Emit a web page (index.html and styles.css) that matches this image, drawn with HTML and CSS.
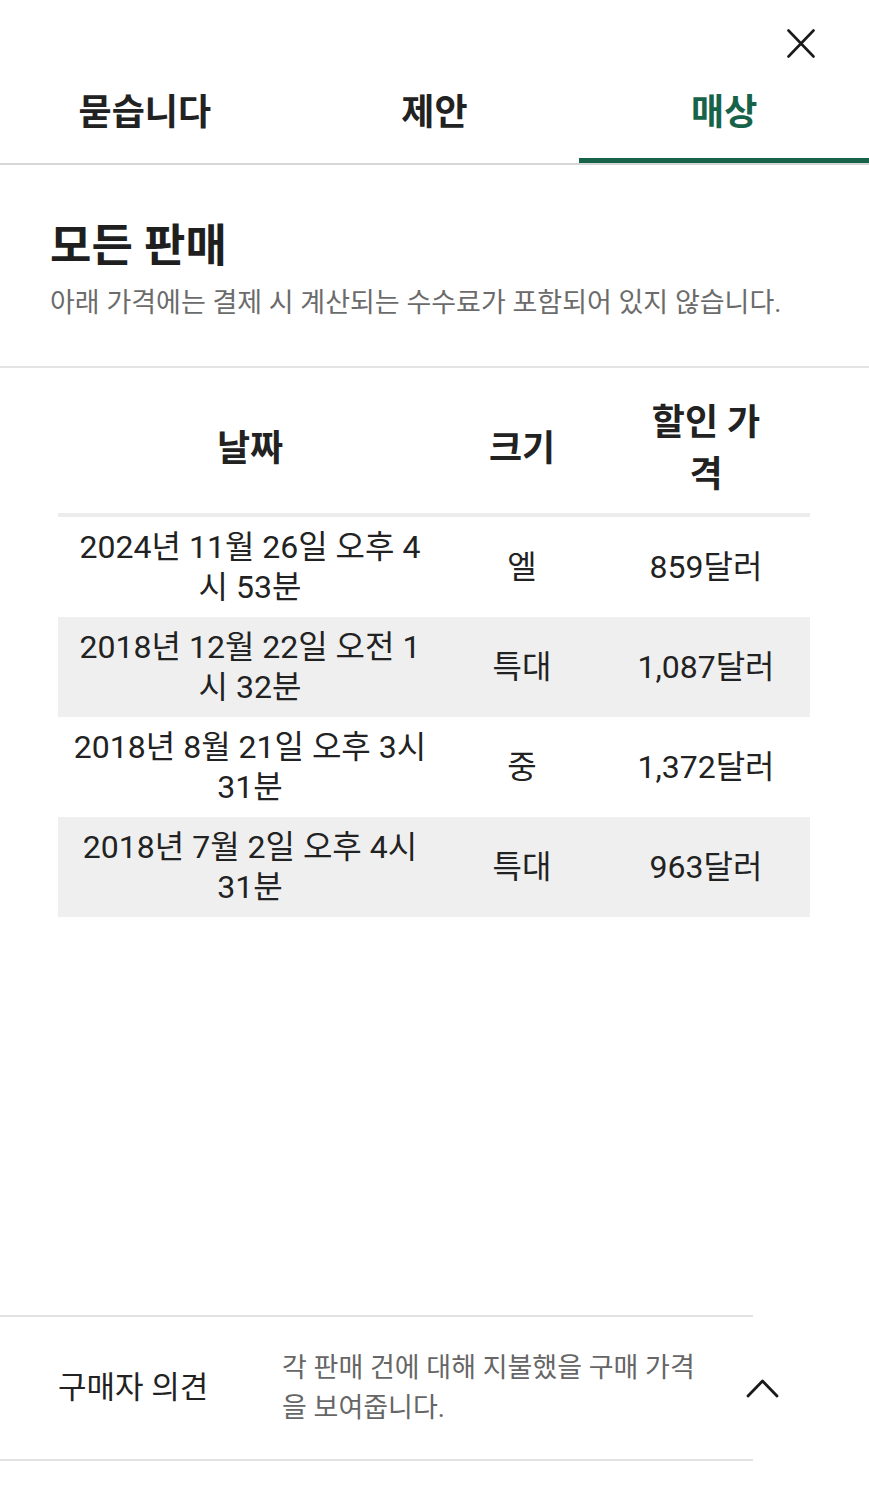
FILE: index.html
```html
<!DOCTYPE html>
<html lang="ko">
<head>
<meta charset="utf-8">
<title>모든 판매</title>
<link rel="stylesheet" href="styles.css">
</head>
<body>
<div class="page">
  <div class="close-row">
    <button class="close" aria-label="닫기">
      <svg width="28" height="29" viewBox="0 0 28 29"><path d="M1.5 1.5L26.5 27.5M26.5 1.5L1.5 27.5" stroke="#1a1a1a" stroke-width="2.6" fill="none" stroke-linecap="round"/></svg>
    </button>
  </div>
  <nav class="tabs">
    <div class="tab">묻습니다</div>
    <div class="tab">제안</div>
    <div class="tab active">매상</div>
  </nav>
  <section class="intro">
    <h1 class="intro-title">모든 판매</h1>
    <p class="intro-note">아래 가격에는 결제 시 계산되는 수수료가 포함되어 있지 않습니다.</p>
  </section>
  <table class="sales-table">
    <colgroup>
      <col class="col-date">
      <col class="col-size">
      <col class="col-price">
    </colgroup>
    <thead>
      <tr>
        <th>날짜</th>
        <th>크기</th>
        <th class="th-price">할인 가격</th>
      </tr>
    </thead>
    <tbody>
      <tr><td class="td-date">2024년 11월 26일 오후 4시 53분</td><td>엘</td><td>859달러</td></tr>
      <tr><td class="td-date">2018년 12월 22일 오전 1시 32분</td><td>특대</td><td>1,087달러</td></tr>
      <tr><td class="td-date">2018년 8월 21일 오후 3시 31분</td><td>중</td><td>1,372달러</td></tr>
      <tr><td class="td-date">2018년 7월 2일 오후 4시 31분</td><td>특대</td><td>963달러</td></tr>
    </tbody>
  </table>
  <div class="buyer">
    <div class="buyer-label">구매자 의견</div>
    <div class="buyer-desc">각 판매 건에 대해 지불했을 구매 가격을 보여줍니다.</div>
    <svg class="chevron" width="33" height="19" viewBox="0 0 33 19"><path d="M2 17L16.5 2L31 17" stroke="#1a1a1a" stroke-width="2.8" fill="none" stroke-linecap="round" stroke-linejoin="round"/></svg>
  </div>
</div>
</body>
</html>
```
FILE: styles.css
```css
html, body {
  margin: 0;
  padding: 0;
  background: #ffffff;
}
body {
  font-family: Roboto, "Noto Sans CJK KR", sans-serif;
  color: #222222;
}
.page {
  width: 869px;
  min-height: 1500px;
  display: flex;
  flex-direction: column;
}
.close-row {
  display: flex;
  justify-content: flex-end;
  padding: 29px 54px 12px 0;
}
.close {
  background: none;
  border: 0;
  padding: 0;
  width: 28px;
  height: 29px;
  display: block;
  cursor: pointer;
}
.close svg {
  display: block;
}
.tabs {
  display: grid;
  grid-template-columns: repeat(3, 1fr);
  border-bottom: 2px solid #d6d6d6;
}
.tab {
  text-align: center;
  font-weight: 700;
  font-size: 36px;
  line-height: 44px;
  padding: 21px 0 23px;
  border-bottom: 5px solid transparent;
  color: #222222;
}
.tab.active {
  color: #17634a;
  border-bottom-color: #17634a;
}
.intro {
  padding: 54px 50px 44px;
  border-bottom: 2px solid #e4e4e4;
}
.intro-title {
  margin: 0 0 9px;
  font-size: 45px;
  line-height: 56px;
  font-weight: 700;
  color: #1f1f1f;
}
.intro-note {
  margin: 0;
  font-size: 27px;
  line-height: 38px;
  color: #6b6b6b;
}
.sales-table {
  margin: 17px 59px 0 58px;
  width: 752px;
  border-collapse: collapse;
  table-layout: fixed;
}
.col-date { width: 384px; }
.col-size { width: 160px; }
.col-price { width: 208px; }
.sales-table th {
  font-size: 36px;
  line-height: 52px;
  font-weight: 700;
  padding: 12px 0;
  border-bottom: 4px solid #ececec;
  vertical-align: middle;
  text-align: center;
  color: #222222;
}
.sales-table th.th-price {
  padding: 12px 45px;
}
.sales-table td {
  font-size: 32px;
  line-height: 40px;
  padding: 10px 4px;
  text-align: center;
  vertical-align: middle;
  color: #222222;
}
.sales-table td.td-date {
  padding: 10px 12px;
}
.sales-table tbody tr:nth-child(even) td {
  background: #efefef;
}
.buyer {
  margin-top: auto;
  margin-bottom: 39px;
  width: 753px;
  box-sizing: border-box;
  border-top: 2px solid #e2e2e2;
  border-bottom: 2px solid #e2e2e2;
  display: flex;
  align-items: center;
  padding: 31px 0 31px 58px;
}
.buyer-label {
  flex-shrink: 0;
  width: 224px;
  font-size: 31px;
  line-height: 40px;
  color: #222222;
}
.buyer-desc {
  flex-shrink: 0;
  width: 428px;
  font-size: 27px;
  line-height: 40px;
  color: #666666;
}
.chevron {
  flex-shrink: 0;
  margin-left: 36px;
  display: block;
}
```
